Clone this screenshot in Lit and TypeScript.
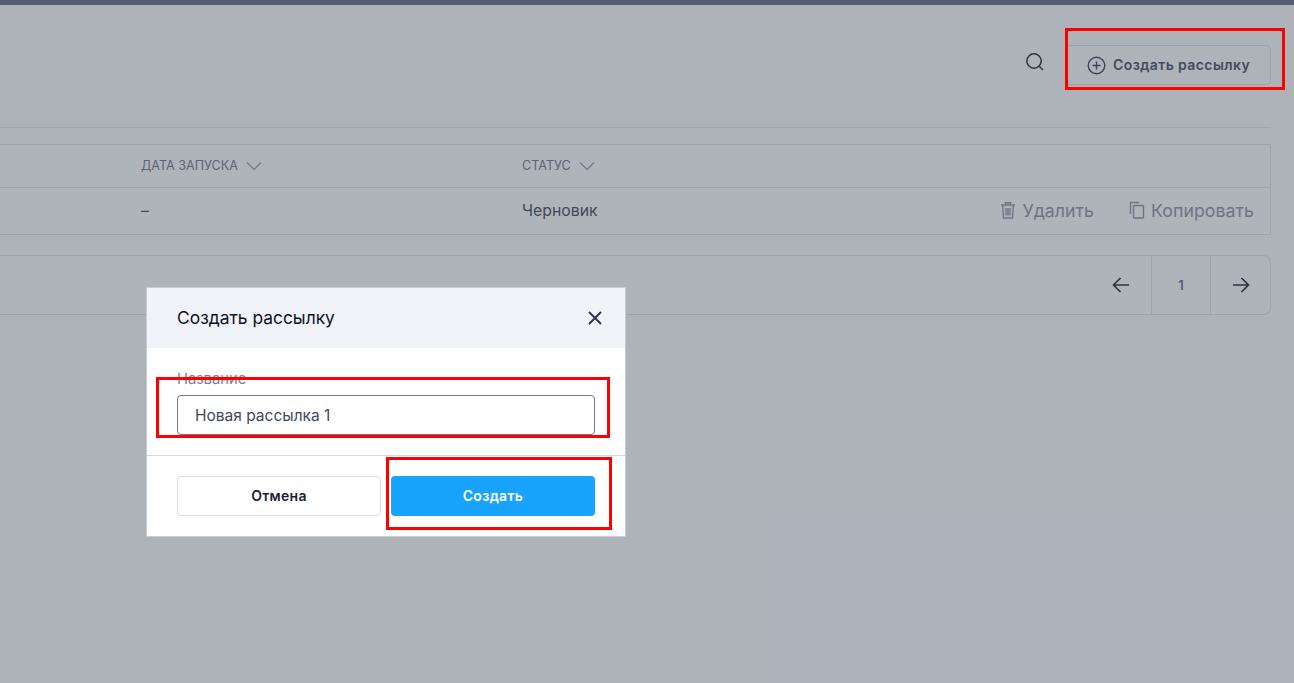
import { LitElement, html, css } from "lit";
import { customElement } from "lit/decorators.js";

@customElement("app-root")
export class AppRoot extends LitElement {
  static styles = css`
    :host { display: block; position: relative; width: 100%; height: 683px; overflow: hidden; background: #fdfdfd; font-family: Inter, "Noto Sans", sans-serif; color: #32364a; }
    * { box-sizing: border-box; }
    .topbar { height: 5px; background: #737792; }
    .page { padding-right: 23px; }
    .head { height: 123px; border-bottom: 1px solid #e6e8ef; display: flex; justify-content: flex-end; align-items: flex-start; padding-top: 40px; gap: 20px; }
    .search { margin-top: 7px; display: block; }
    .create { width: 206px; height: 40px; border: 1px solid #e3e5ed; border-radius: 4px; display: flex; align-items: center; gap: 7px; padding: 0 0 2px 21px; font-size: 14px; font-weight: 600; color: #5a5c6c; letter-spacing: .4px; }
    .plus { margin-top: 2px; }
    .table { margin-top: 16px; border: 1px solid #e3e5ed; border-left: 0; background: #fff; height: 91px; }
    .row { display: grid; grid-template-columns: 141px 381px 1fr auto; align-items: center; }
    .thead { height: 43px; border-bottom: 1px solid #e3e5ed; font-size: 12.6px; color: #80838f; }
    .thead .th { padding-bottom: 1px; }
    .tbody { height: 46px; font-size: 15.8px; color: #55575f; }
    .tbody > span { padding-bottom: 2px; }
    .th { display: flex; align-items: center; gap: 8px; }
    .actions { display: flex; gap: 35px; padding: 0 16px 2px 0; color: #9a9ca8; font-size: 17.8px; }
    .act { display: flex; align-items: center; gap: 6px; }
    .pager { margin-top: 20px; height: 60px; border: 1px solid #e3e5ed; border-left: 0; border-radius: 0 8px 8px 0; background: #fff; display: flex; justify-content: flex-end; }
    .cell { display: flex; align-items: center; justify-content: center; }
    .arrow { width: 60px; }
    .arrow.next { width: 59px; }
    .num { width: 60px; border-left: 1px solid #e3e5ed; border-right: 1px solid #e3e5ed; font-size: 13px; font-weight: 600; color: #727a94; }
    .scrim { position: absolute; inset: 0; background: rgba(34, 46, 66, .36); }
    .modal { position: absolute; left: 146px; top: 287px; width: 480px; height: 250px; background: #fff; border: 1px solid #c9cbd2; display: flex; flex-direction: column; }
    .mhead { height: 60px; background: #f1f3f9; display: flex; align-items: center; justify-content: space-between; padding: 0 22px 1px 30px; font-size: 17.4px; color: #10121f; }
    .mbody { height: 108px; padding: 22px 30px 0; border-bottom: 1px solid #d5d6e0; }
    .label { font-size: 14.8px; line-height: 18px; color: #7b7f92; margin-bottom: 7px; }
    .input { height: 40px; border: 1px solid #74768e; border-radius: 4px; display: flex; align-items: center; padding-left: 17px; font-size: 15.5px; color: #3f4a5e; }
    .mfoot { padding: 20px 30px; display: grid; grid-template-columns: 1fr 1fr; gap: 10px; }
    .btn { height: 40px; border-radius: 4px; display: flex; align-items: center; justify-content: center; font-size: 14px; font-weight: 600; letter-spacing: .3px; padding-bottom: 1px; }
    .cancel { border: 1px solid #dcdde6; color: #1f2133; }
    .ok { background: #18a4fe; color: #fff; }
    .mark { position: absolute; border: 3px solid #fe0000; }
    .m1 { left: 1065px; top: 28px; width: 220px; height: 62px; }
    .m2 { left: 156px; top: 377px; width: 454px; height: 61px; }
    .m3 { left: 386px; top: 457px; width: 226px; height: 73px; }
  `;

  render() {
    return html`
      <div class="topbar"></div>
      <div class="page">
        <div class="head">
          <svg class="search" width="20" height="20" viewBox="0 0 20 20" fill="none" stroke="#363840" stroke-width="1.5"><circle cx="9" cy="9" r="7.2"/><path d="M14.2 14.2L18 18"/></svg>
          <div class="create">
            <svg class="plus" width="19" height="19" viewBox="0 0 19 19" fill="none" stroke="#4d4f5e" stroke-width="1.4"><circle cx="9.5" cy="9.5" r="8.3"/><path d="M9.5 5.5v8M5.5 9.5h8"/></svg>
            Создать рассылку
          </div>
        </div>
        <div class="table">
          <div class="row thead">
            <span></span>
            <div class="th">ДАТА ЗАПУСКА <svg width="16" height="10" viewBox="0 0 16 10" fill="none" stroke="#a8acba" stroke-width="1.5"><path d="M1 1.5l7 7 7-7"/></svg></div>
            <div class="th">СТАТУС <svg width="16" height="10" viewBox="0 0 16 10" fill="none" stroke="#a8acba" stroke-width="1.5"><path d="M1 1.5l7 7 7-7"/></svg></div>
            <span></span>
          </div>
          <div class="row tbody">
            <span></span>
            <span>–</span>
            <span>Черновик</span>
            <div class="actions">
              <div class="act">
                <svg width="16" height="18" viewBox="0 0 16 18" fill="none" stroke="#9a9ca8" stroke-width="1.4"><path d="M1 4h14M5.5 4V1.7h5V4M2.7 4l.8 13h9l.8-13M6 7v7.5M8 7v7.5M10 7v7.5"/></svg>
                Удалить
              </div>
              <div class="act">
                <svg width="16" height="18" viewBox="0 0 16 18" fill="none" stroke="#9a9ca8" stroke-width="1.4"><path d="M1.5 13V1.5H10"/><rect x="4.5" y="4.5" width="10" height="12.5" rx="1"/></svg>
                Копировать
              </div>
            </div>
          </div>
        </div>
        <div class="pager">
          <div class="cell arrow"><svg width="18" height="16" viewBox="0 0 18 16" fill="none" stroke="#363840" stroke-width="1.7"><path d="M17 8H1.5M8.5 1L1.5 8l7 7"/></svg></div>
          <div class="cell num">1</div>
          <div class="cell arrow next"><svg width="18" height="16" viewBox="0 0 18 16" fill="none" stroke="#363840" stroke-width="1.7"><path d="M1 8h15.5M9.5 1l7 7-7 7"/></svg></div>
        </div>
      </div>
      <div class="scrim"></div>
      <div class="modal">
        <div class="mhead">
          <span>Создать рассылку</span>
          <svg width="16" height="16" viewBox="0 0 16 16" fill="none" stroke="#32364a" stroke-width="2"><path d="M2 2l12 12M14 2L2 14"/></svg>
        </div>
        <div class="mbody">
          <div class="label">Название</div>
          <div class="input">Новая рассылка 1</div>
        </div>
        <div class="mfoot">
          <div class="btn cancel">Отмена</div>
          <div class="btn ok">Создать</div>
        </div>
      </div>
      <div class="mark m1"></div>
      <div class="mark m2"></div>
      <div class="mark m3"></div>
    `;
  }
}
